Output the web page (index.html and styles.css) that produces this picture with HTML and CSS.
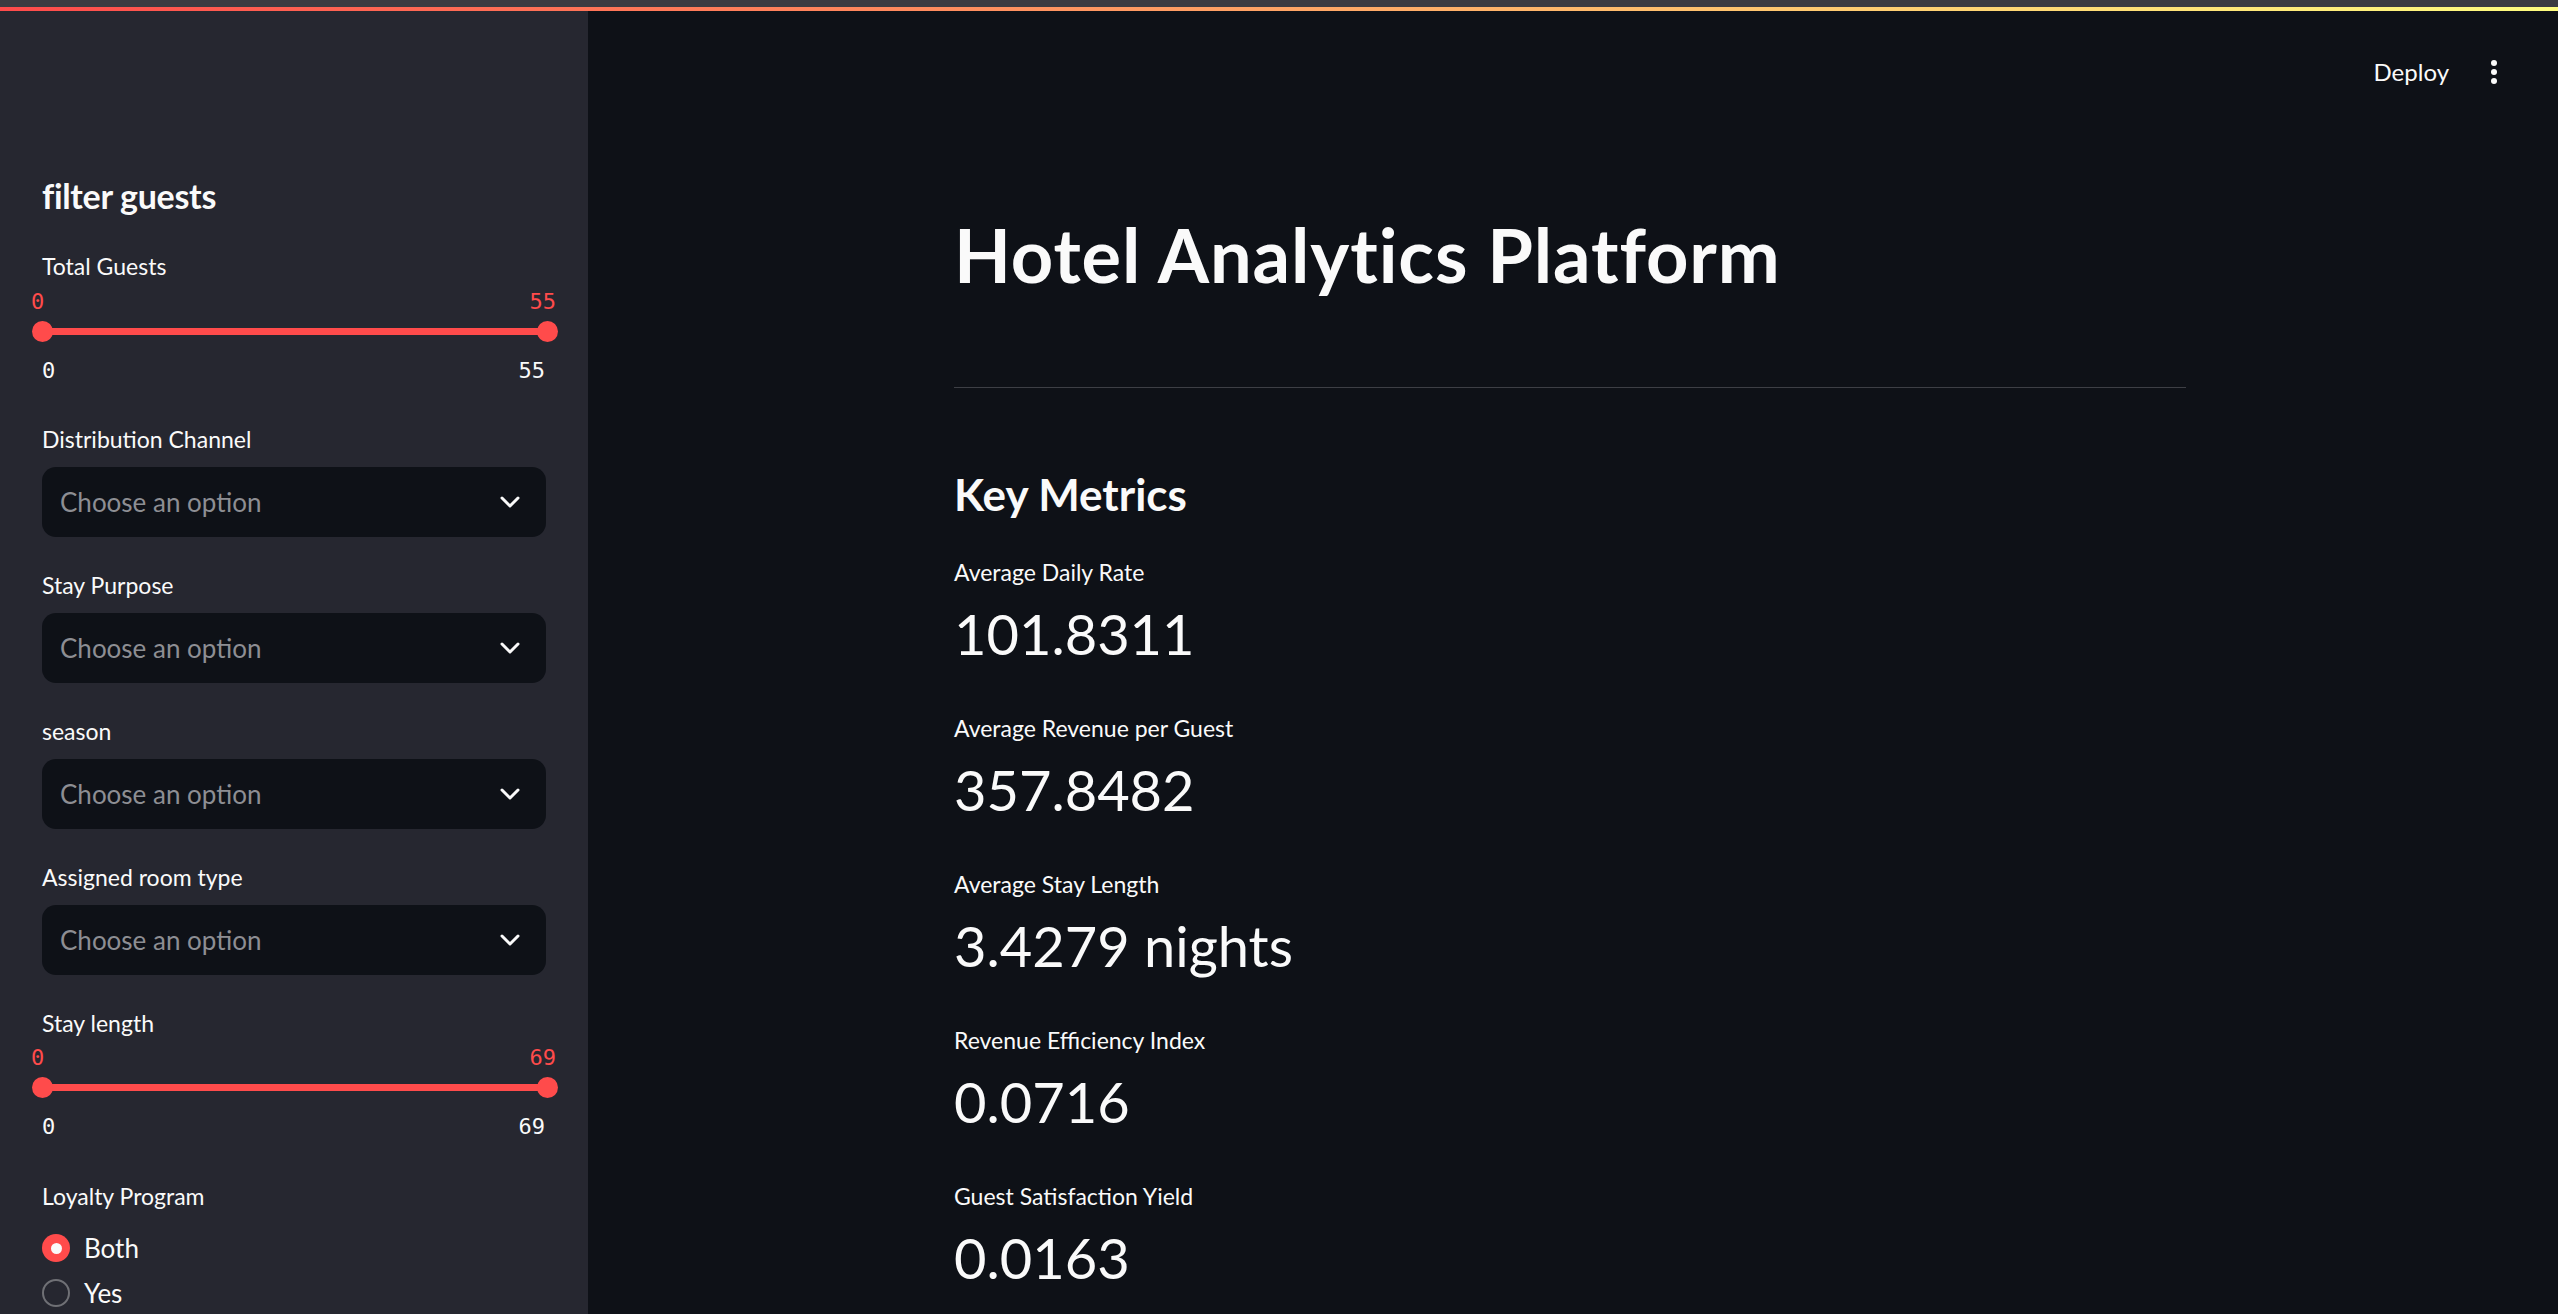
FILE: index.html
```html
<!DOCTYPE html>
<html lang="en">
<head>
<meta charset="utf-8">
<title>Hotel Analytics Platform</title>
<link rel="stylesheet" href="styles.css">
</head>
<body>
<div class="topstrip"></div>
<div class="decoration"></div>
<div class="app">
  <aside class="sidebar">
    <h2 class="side-title">filter guests</h2>

    <div class="field">
      <div class="label">Total Guests</div>
      <div class="slider">
        <div class="thumb-values"><span>0</span><span>55</span></div>
        <div class="track-area"><div class="track"></div><span class="thumb thumb-left"></span><span class="thumb thumb-right"></span></div>
        <div class="minmax"><span>0</span><span>55</span></div>
      </div>
    </div>

    <div class="field">
      <div class="label">Distribution Channel</div>
      <div class="select"><span class="placeholder">Choose an option</span><svg class="chev" viewBox="0 0 20 12" width="20" height="12"><polyline points="2,2 10,10 18,2" fill="none" stroke="#fafafa" stroke-width="3" stroke-linecap="round" stroke-linejoin="round"/></svg></div>
    </div>

    <div class="field">
      <div class="label">Stay Purpose</div>
      <div class="select"><span class="placeholder">Choose an option</span><svg class="chev" viewBox="0 0 20 12" width="20" height="12"><polyline points="2,2 10,10 18,2" fill="none" stroke="#fafafa" stroke-width="3" stroke-linecap="round" stroke-linejoin="round"/></svg></div>
    </div>

    <div class="field">
      <div class="label">season</div>
      <div class="select"><span class="placeholder">Choose an option</span><svg class="chev" viewBox="0 0 20 12" width="20" height="12"><polyline points="2,2 10,10 18,2" fill="none" stroke="#fafafa" stroke-width="3" stroke-linecap="round" stroke-linejoin="round"/></svg></div>
    </div>

    <div class="field">
      <div class="label">Assigned room type</div>
      <div class="select"><span class="placeholder">Choose an option</span><svg class="chev" viewBox="0 0 20 12" width="20" height="12"><polyline points="2,2 10,10 18,2" fill="none" stroke="#fafafa" stroke-width="3" stroke-linecap="round" stroke-linejoin="round"/></svg></div>
    </div>

    <div class="field">
      <div class="label">Stay length</div>
      <div class="slider slider-b">
        <div class="thumb-values"><span>0</span><span>69</span></div>
        <div class="track-area"><div class="track"></div><span class="thumb thumb-left"></span><span class="thumb thumb-right"></span></div>
        <div class="minmax"><span>0</span><span>69</span></div>
      </div>
    </div>

    <div class="field field-radio">
      <div class="label">Loyalty Program</div>
      <div class="radios">
        <div class="radio"><span class="dot dot-on"></span><span>Both</span></div>
        <div class="radio"><span class="dot"></span><span>Yes</span></div>
      </div>
    </div>
  </aside>

  <main class="main">
    <header class="toolbar">
      <span class="deploy">Deploy</span>
      <span class="kebab"><i></i><i></i><i></i></span>
    </header>
    <div class="block">
      <h1 class="title">Hotel Analytics Platform</h1>
      <hr class="divider">
      <h3 class="section">Key Metrics</h3>
      <div class="metric"><div class="m-label">Average Daily Rate</div><div class="m-value">101.8311</div></div>
      <div class="metric"><div class="m-label">Average Revenue per Guest</div><div class="m-value">357.8482</div></div>
      <div class="metric"><div class="m-label">Average Stay Length</div><div class="m-value">3.4279 nights</div></div>
      <div class="metric"><div class="m-label">Revenue Efficiency Index</div><div class="m-value">0.0716</div></div>
      <div class="metric"><div class="m-label">Guest Satisfaction Yield</div><div class="m-value">0.0163</div></div>
    </div>
  </main>
</div>
</body>
</html>
```

FILE: styles.css
```css
* { box-sizing: border-box; }
html, body {
  margin: 0;
  padding: 0;
  height: 1314px;
  overflow: hidden;
  background: #0e1117;
  color: #fafafa;
  font-family: Lato, "Noto Sans", sans-serif;
}
.topstrip { height: 7px; background: #3c3b41; }
.decoration {
  height: 4px;
  background: linear-gradient(90deg, #ff4b4b, #fffd80);
}
.app {
  display: flex;
  height: 1303px;
}

/* Sidebar */
.sidebar {
  width: 588px;
  flex: none;
  background: #262730;
  padding: 163px 42px 0 42px;
  overflow: hidden;
}
.side-title {
  margin: 0;
  font-size: 34px;
  line-height: 44px;
  font-weight: 700;
  letter-spacing: -0.3px;
}
.field { margin-top: 32px; }
.label {
  font-size: 23px;
  line-height: 32px;
}
.slider { margin-top: 7px; padding-bottom: 7px; }
.slider-b { margin-top: 6px; }
.thumb-values, .minmax {
  display: flex;
  justify-content: space-between;
  font-family: "DejaVu Sans Mono", "Liberation Mono", monospace;
  font-size: 22px;
  line-height: 26px;
}
.thumb-values { color: #ff4b4b; margin: 0 -10px 0 -11px; }
.minmax { margin-top: 11px; margin-right: 1px; }
.track-area {
  position: relative;
  height: 32px;
  display: flex;
  align-items: center;
}
.track {
  width: 100%;
  height: 7px;
  background: #ff4b4b;
}
.thumb {
  position: absolute;
  top: 5.5px;
  width: 21px;
  height: 21px;
  border-radius: 50%;
  background: #ff4b4b;
}
.thumb-left { left: -10.5px; }
.thumb-right { right: -11.5px; }

.select {
  margin-top: 12px;
  height: 70px;
  border-radius: 14px;
  background: #0e1117;
  display: flex;
  align-items: center;
  justify-content: space-between;
  padding: 0 26px 0 18px;
}
.placeholder {
  font-size: 26px;
  line-height: 32px;
  color: #8d8e93;
}
.chev { display: block; }

.field-radio { margin-top: 33px; }
.radios { margin-top: 16px; display: flex; flex-direction: column; gap: 5px; }
.radio {
  display: flex;
  align-items: center;
  height: 40px;
  font-size: 26px;
  line-height: 40px;
  gap: 14px;
}
.dot {
  width: 28px;
  height: 28px;
  border-radius: 50%;
  border: 2px solid #6f7075;
  flex: none;
}
.dot-on {
  border: none;
  background: #ff4b4b;
  display: flex;
  align-items: center;
  justify-content: center;
}
.dot-on::after {
  content: "";
  width: 11px;
  height: 11px;
  border-radius: 50%;
  background: #fafafa;
}

/* Main */
.main {
  flex: 1;
  display: flex;
  flex-direction: column;
  min-width: 0;
}
.toolbar {
  display: flex;
  justify-content: flex-end;
  align-items: center;
  height: 91px;
  padding-top: 21px;
  padding-right: 61px;
  gap: 42px;
}
.deploy {
  font-size: 24px;
  line-height: 30px;
  margin-top: 10px;
}
.kebab {
  display: flex;
  flex-direction: column;
  gap: 3px;
  margin-top: 10px;
}
.kebab i {
  display: block;
  width: 6px;
  height: 6px;
  border-radius: 50%;
  background: #fafafa;
}
.block {
  width: 1232px;
  margin: 0 auto;
  padding-top: 109px;
  position: relative;
  left: -3px;
}
.title {
  margin: 0;
  font-size: 74px;
  line-height: 88px;
  font-weight: 700;
  letter-spacing: 0.9px;
}
.divider {
  margin: 88px 0 0 0;
  border: none;
  height: 1px;
  background: #3d3f45;
}
.section {
  margin: 79px 0 0 0;
  font-size: 44px;
  line-height: 54px;
  font-weight: 700;
}
.metric { margin-top: 36px; }
.metric + .metric { margin-top: 46px; }
.m-label {
  font-size: 23px;
  line-height: 30px;
}
.m-value {
  margin-top: 14px;
  font-size: 56px;
  line-height: 66px;
  font-weight: 400;
}
```
